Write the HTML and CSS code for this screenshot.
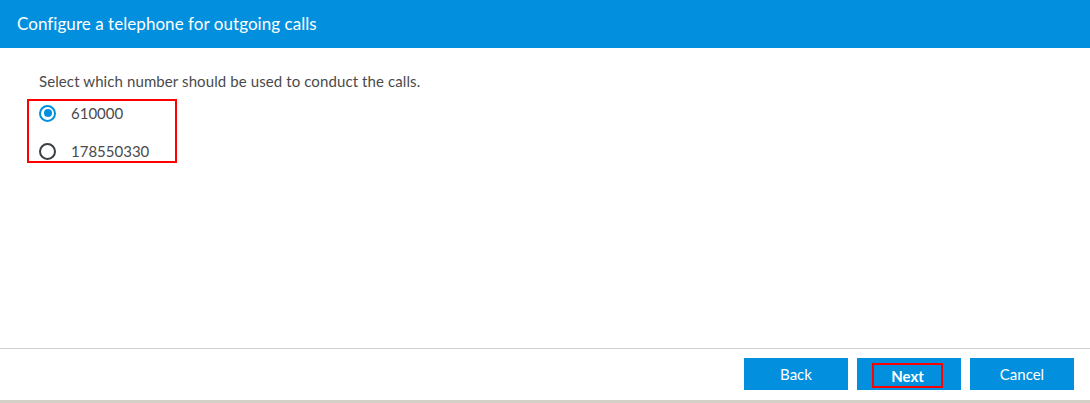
FILE: index.html
```html
<!DOCTYPE html>
<html>
<head>
<meta charset="utf-8">
<link rel="stylesheet" href="styles.css">
</head>
<body>
<div class="dialog">
  <div class="header">Configure a telephone for outgoing calls</div>
  <div class="content">
    <p class="prompt">Select which number should be used to conduct the calls.</p>
    <div class="options">
      <label class="option"><span class="radio checked"></span><span class="num">610000</span></label>
      <label class="option"><span class="radio"></span><span class="num">178550330</span></label>
    </div>
  </div>
  <div class="footer">
    <button class="btn">Back</button>
    <button class="btn primary"><span class="mark">Next</span></button>
    <button class="btn">Cancel</button>
  </div>
  <div class="shadow"></div>
</div>
</body>
</html>
```
FILE: styles.css
```css
html, body {
  margin: 0;
  padding: 0;
  background: #fff;
}
body {
  font-family: Lato, "Open Sans", sans-serif;
  color: #4a4a4a;
}
.dialog {
  width: 1090px;
  height: 403px;
  display: flex;
  flex-direction: column;
}
.header {
  height: 48px;
  background: #0290de;
  color: #fff;
  font-size: 17px;
  line-height: 48px;
  letter-spacing: 0.05px;
  padding-left: 17px;
  box-sizing: border-box;
}
.content {
  flex: 1;
  padding: 0 0 0 27px;
}
.prompt {
  margin: 24px 0 0 12px;
  font-size: 15px;
  line-height: 19px;
  letter-spacing: 0.1px;
}
.options {
  margin-top: 8px;
  width: 146px;
  height: 58px;
  border: 2px solid #f00;
  padding-top: 2px;
  display: flex;
  flex-direction: column;
  gap: 18px;
  box-sizing: content-box;
}
.option {
  display: flex;
  align-items: center;
  height: 20px;
  padding-left: 10px;
  font-size: 15px;
}
.radio {
  width: 17px;
  height: 17px;
  border: 2px solid #3a3f44;
  border-radius: 50%;
  box-sizing: border-box;
  position: relative;
  margin-right: 15px;
  flex: none;
}
.radio.checked {
  border-color: #0290de;
}
.radio.checked::after {
  content: "";
  position: absolute;
  left: 2.5px;
  top: 2.5px;
  width: 8px;
  height: 8px;
  border-radius: 50%;
  background: #0290de;
}
.footer {
  height: 52px;
  border-top: 1px solid #d0d0d0;
  display: flex;
  justify-content: flex-end;
  align-items: flex-start;
  padding: 9px 16px 0 0;
  gap: 9px;
  box-sizing: border-box;
}
.btn {
  width: 104px;
  height: 32px;
  background: #0290de;
  color: #fff;
  border: none;
  font-family: Lato, "Open Sans", sans-serif;
  font-size: 15px;
  padding: 0;
  display: flex;
  align-items: center;
  justify-content: center;
}
.btn.primary {
  font-weight: bold;
}
.mark {
  width: 71px;
  height: 25px;
  border: 2px solid #f00;
  box-sizing: border-box;
  display: flex;
  align-items: center;
  justify-content: center;
  margin: 3px 3px 0 0;
}
.shadow {
  height: 3px;
  background: #d4d0c8;
}
```
